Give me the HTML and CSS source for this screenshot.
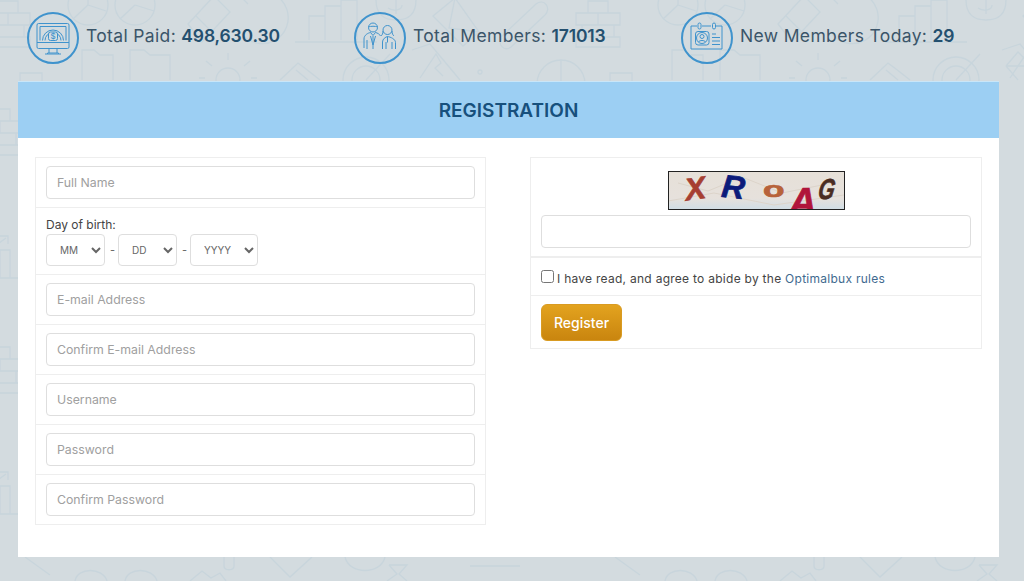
FILE: index.html
```html
<!DOCTYPE html>
<html lang="en">
<head>
  <meta charset="UTF-8">
  <meta name="viewport" content="width=device-width, initial-scale=1.0">
  <title>Registration</title>
  <link rel="stylesheet" href="styles.css">
</head>
<body>
  <!-- faint wallpaper of office icons behind the page -->
  <svg class="wallpaper" width="1024" height="581" viewBox="0 0 1024 581" aria-hidden="true">
    <defs>
      <g id="bricks">
        <path d="M14 1h20v12h-20zM2 13h22v12h-22zM24 13h22v12h-22zM8 25h32v12h-32zM2 37h44v10h-44z"/>
      </g>
      <g id="chart">
        <path d="M0 44h34M6 44v-20h10v20M16 44v-28h10v28M0 20l22-16M16 2h8v8"/>
      </g>
      <g id="top-row">
        <use href="#bricks" x="574" y="0"/>
        <circle cx="88" cy="5" r="20"/><path d="M88 5l-15 14M88 5v-20M88 5l18 6"/>
        <circle cx="135" cy="5" r="20"/><path d="M135 5l-15 14M135 5l19 6"/>
        <path d="M188 24l26-28 16 16-28 30zM196 16l16 16"/>
        <path d="M258-8a26 26 0 1 1-16 42M248 4l-6-6 8-2"/>
        <path d="M295 42h82M309 40v-24h16v24M325 40v-34h16v34M341 40v-40h16v40"/>
        <path d="M376 0c0 14 8 20 20 20s20-6 20-20M396 0v14M388 8c6 4 14 2 14-3"/>
        <path d="M433 16l22-18 24 34-16 14zM455-2l-6 30 30 4"/>
        <path d="M500 38l36-34c8-6 16 4 9 11l-34 32c-7 5-14-3-9-9"/>
        <path d="M82 80v-30h12l6 5h13v25M130 80v-30h14l6 5h20v25"/>
        <circle cx="228" cy="80" r="12"/><path d="M228 60v-7M212 66l-6-5M244 66l6-5M205 78h-6M251 78h6"/>
        <path d="M280 80l18-17 8 6 14 11M296 70l12 10"/>
        <circle cx="366" cy="80" r="23"/><circle cx="366" cy="80" r="14"/><path d="M366 80l24-26"/>
        <path d="M412 50l18-6 30 36M420 78l16-24 5 9-6 5 8 8"/>
        <circle cx="480" cy="72" r="2"/>
        <circle cx="561" cy="84" r="24"/><path d="M561 60v24"/>
        <path d="M610 81v-8h22v8"/>
      </g>
      <g id="bottom-row">
        <path d="M25 557l25 18M470 566h50"/>
        <path d="M75 581c2-14 28-14 32 0M125 581c2-14 28-14 32 0"/>
        <path d="M190 581l12-10 9 7 9-5 6 8"/>
        <path d="M224 557v9c0 5 10 5 10 0v-9"/>
        <path d="M270 557l20 20 22-20"/>
        <path d="M345 557c4 18 36 18 40 0"/>
        <path d="M389 565h18l-8 9 8 7M389 565l8 9-10 7"/>
      </g>
    </defs>
    <g class="wallpaper-lines">
      <use href="#top-row" x="0" y="0"/>
      <use href="#top-row" x="-590" y="0"/>
      <use href="#top-row" x="590" y="0"/>
      <use href="#bottom-row" x="0" y="0"/>
      <use href="#bottom-row" x="590" y="0"/>
      <use href="#bricks" x="-24" y="108"/>
      <use href="#bricks" x="-24" y="346"/>
      <use href="#chart" x="-16" y="234"/>
      <use href="#chart" x="-16" y="470"/>
      <path d="M1006 66l12-14 8 8M1006 66h18M1006 66l12 14"/>
    </g>
  </svg>

  <div class="stats">
    <div class="stat">
      <svg class="stat-icon" width="52" height="52" viewBox="0 0 52 52">
        <circle class="ring" cx="26" cy="26" r="25"/>
        <rect x="10" y="11.500" width="32" height="25" rx="1.500"/>
        <path d="M10 30.500h32M13 28.500v-14h26v14M22 36.500v4.500M30 36.500v4.500M18 42h16M20.500 42v-1h11v1"/>
        <path d="M15.500 28.500a10.500 10.500 0 0 1 21 0M18 28.500a8 8 0 0 1 16 0"/>
        <rect class="coin" x="21.500" y="20" width="9" height="8.500" rx="2"/>
        <text class="dollar" x="26" y="27">$</text>
      </svg>
      <p class="stat-text">Total Paid: <strong>498,630.30</strong></p>
    </div>
    <div class="stat">
      <svg class="stat-icon" width="52" height="52" viewBox="0 0 52 52">
        <circle class="ring" cx="26" cy="26" r="25"/>
        <circle cx="19" cy="15.500" r="4.500"/>
        <path d="M14.500 15c2-1 7-1 9 0M10 36v-9c0-4 4-6 6.500-6.500l2.500 3 2.500-3c2 .5 4 1.500 5 3.500M13 37v-9M19 24v13M16.500 24l2.500 9 2.500-9"/>
        <circle cx="33.500" cy="18" r="4.500"/>
        <path d="M29 19c0 3-1 4-2 5M38 19c0 3 1 4 2 5M28.500 37v-7c0-3 3-5 5-5.500 3 .5 8 2.500 8 6v6.500M32 37v-7M38 37v-7M33.500 24.500v6"/>
      </svg>
      <p class="stat-text">Total Members: <strong>171013</strong></p>
    </div>
    <div class="stat">
      <svg class="stat-icon" width="52" height="52" viewBox="0 0 52 52">
        <circle class="ring" cx="26" cy="26" r="25"/>
        <path d="M16 14h-6v23h31v-23h-6M21 14h9"/>
        <rect x="17" y="11" width="3" height="6" rx="1.500"/>
        <rect x="31.500" y="11" width="3" height="6" rx="1.500"/>
        <rect x="14.500" y="19.500" width="13.500" height="13.500" rx="2.500"/>
        <circle cx="21" cy="26" r="5.500"/>
        <circle cx="21" cy="24.500" r="2"/>
        <path d="M17.500 30c1-2 6-2 7 0M31 22h4M31 25.500h8M31 29h8M31 32.500h8"/>
      </svg>
      <p class="stat-text">New Members Today: <strong>29</strong></p>
    </div>
  </div>

  <div class="card">
    <h1 class="card-title">REGISTRATION</h1>
    <div class="columns">
      <div class="panel">
        <div class="row">
          <input class="field" type="text" placeholder="Full Name">
        </div>
        <div class="row row-dob">
          <label class="dob-label">Day of birth:</label>
          <div class="dob">
            <select class="pick pick-short"><option>MM</option></select>
            <span class="dash">-</span>
            <select class="pick pick-short"><option>DD</option></select>
            <span class="dash">-</span>
            <select class="pick pick-long"><option>YYYY</option></select>
          </div>
        </div>
        <div class="row">
          <input class="field" type="text" placeholder="E-mail Address">
        </div>
        <div class="row">
          <input class="field" type="text" placeholder="Confirm E-mail Address">
        </div>
        <div class="row">
          <input class="field" type="text" placeholder="Username">
        </div>
        <div class="row">
          <input class="field" type="password" placeholder="Password">
        </div>
        <div class="row">
          <input class="field" type="password" placeholder="Confirm Password">
        </div>
      </div>

      <div class="panel panel-right">
        <div class="row row-captcha">
          <svg class="captcha" width="177" height="39" viewBox="0 0 177 39">
            <defs>
              <linearGradient id="paper" x1="0" y1="0" x2="0" y2="1">
                <stop offset="0" stop-color="#e6e0d8"/>
                <stop offset="0.7" stop-color="#e6e1dc"/>
                <stop offset="1" stop-color="#cfdde6"/>
              </linearGradient>
            </defs>
            <rect width="177" height="39" fill="url(#paper)"/>
            <path d="M10 12l30 8 34-14 40 16 50-10M0 30l46-8 60 12 70-10" class="captcha-creases"/>
            <text class="glyph" x="17" y="28" fill="#a63f32" stroke="#a63f32" font-size="31" transform="rotate(-8 28 18)">X</text>
            <text class="glyph" x="54" y="27" fill="#0c1b7a" stroke="#0c1b7a" font-size="32" transform="rotate(6 66 14)">R</text>
            <text class="glyph glyph-o" fill="#b7623a" stroke="#b7623a" font-size="22" transform="translate(95 26) scale(1.6 1)">o</text>
            <text class="glyph" x="121" y="44" fill="#b0153a" stroke="#b0153a" font-size="38">A</text>
            <text class="glyph" fill="#4a2c22" stroke="#4a2c22" font-size="29" transform="translate(149 28) skewX(-10) scale(.72 1)">G</text>
            <rect class="captcha-frame" x="0.500" y="0.500" width="176" height="38"/>
          </svg>
          <input class="field" type="text">
        </div>
        <div class="row row-agree">
          <input class="check" type="checkbox">
          <span class="agree-text">I have read, and agree to abide by the <a class="rules" href="#">Optimalbux rules</a></span>
        </div>
        <div class="row row-submit">
          <button class="register" type="button">Register</button>
        </div>
      </div>
    </div>
  </div>
</body>
</html>
```

FILE: styles.css
```css
body {
  font-family: Inter, "Open Sans", Arial, sans-serif;
  background-color: #d3dbdf;
  margin: 0;
  padding: 0;
  height: 581px;
  overflow: hidden;
}

.wallpaper {
  position: absolute;
  top: 0;
  left: 0;
}

.wallpaper-lines {
  fill: none;
  stroke: #c8d5dc;
  stroke-width: 1.3;
}

.stats {
  position: relative;
  display: grid;
  grid-template-columns: repeat(3, 327px);
  padding: 12px 0 0 27px;
  height: 52px;
}

.stat {
  display: flex;
  align-items: center;
  gap: 7px;
  height: 52px;
}

.stat-icon {
  fill: none;
  stroke: #3f93cd;
  stroke-width: 1;
  flex-shrink: 0;
}

.stat-icon .ring {
  stroke-width: 2;
}

.stat-icon .coin {
  fill: #d3dbdf;
}

.dollar {
  fill: #3f93cd;
  stroke: none;
  font-size: 8px;
  font-weight: 500;
  text-anchor: middle;
}

.stat-text {
  margin: 0 0 6px;
  font-size: 17.5px;
  letter-spacing: 0.35px;
  color: #3b5569;
}

.stat-text strong {
  font-weight: 600;
  letter-spacing: -0.15px;
  color: #24506f;
}

.card {
  position: relative;
  width: 981px;
  height: 476px;
  margin: 17px 0 0 18px;
  background-color: #fff;
}

.card-title {
  margin: 0;
  height: 57px;
  border-top: 1px solid #c9e6f8;
  box-sizing: border-box;
  line-height: 57px;
  background-color: #9ccff3;
  color: #17507c;
  font-size: 19px;
  font-weight: 600;
  text-align: center;
}

.columns {
  display: flex;
  align-items: flex-start;
  gap: 44px;
  padding: 19px 17px 0;
}

.panel {
  width: 451px;
  border: 1px solid #eeeeee;
  box-sizing: border-box;
}

.panel-right {
  width: 452px;
}

.row {
  height: 50px;
  padding: 8px 10px;
  border-top: 1px solid #eeeeee;
  box-sizing: border-box;
}

.row:first-child {
  border-top: none;
  height: 49px;
}

.field {
  display: block;
  width: 100%;
  height: 33px;
  padding: 0 10px;
  border: 1px solid #dedede;
  border-radius: 4px;
  box-sizing: border-box;
  font-family: inherit;
  font-size: 12.3px;
  color: #444;
}

.field::placeholder {
  color: #a0a0a0;
}

.row-dob {
  height: 67px;
  padding-top: 8px;
}

.dob-label {
  display: block;
  height: 18px;
  line-height: 17px;
  font-size: 12px;
  color: #444;
}

.dob {
  display: flex;
  align-items: center;
  gap: 5px;
}

.dash {
  width: 3px;
  font-size: 11px;
  color: #666;
}

.pick {
  height: 32px;
  padding-left: 9px;
  border: 1px solid #dedede;
  border-radius: 4px;
  background-color: #fff;
  font-family: inherit;
  font-size: 10px;
  color: #666;
}

.pick-short {
  width: 59px;
}

.pick-long {
  width: 68px;
}

.row.row-captcha {
  height: 98px;
  padding-top: 13px;
}

.captcha {
  display: block;
  margin: 0 auto 5px;
}

.captcha-creases {
  fill: none;
  stroke: #dcd4ca;
  stroke-width: 1;
}

.captcha-frame {
  fill: none;
  stroke: #222;
  stroke-width: 1;
}

.glyph {
  font-family: "Liberation Sans", Arial, sans-serif;
  font-weight: 700;
  font-style: italic;
  stroke-width: 0.7;
}

.glyph-o {
  font-style: normal;
}

.row-agree {
  height: 39px;
  padding-top: 12px;
  display: flex;
  align-items: flex-start;
  border-top: 2px solid #eeeeee;
}

.check {
  width: 13px;
  height: 13px;
  margin: 0 3px 0 0;
}

.agree-text {
  font-size: 12px;
  letter-spacing: 0.27px;
  line-height: 18px;
  color: #444;
}

.rules {
  color: #3f6a8f;
  text-decoration: none;
}

.row-submit {
  height: 53px;
}

.register {
  width: 81px;
  height: 37px;
  border: 1px solid #d99b22;
  border-radius: 6px;
  background: linear-gradient(#e3a31f, #c9850f);
  color: #fff;
  font-family: inherit;
  font-size: 14px;
  font-weight: 500;
  cursor: pointer;
}
```
